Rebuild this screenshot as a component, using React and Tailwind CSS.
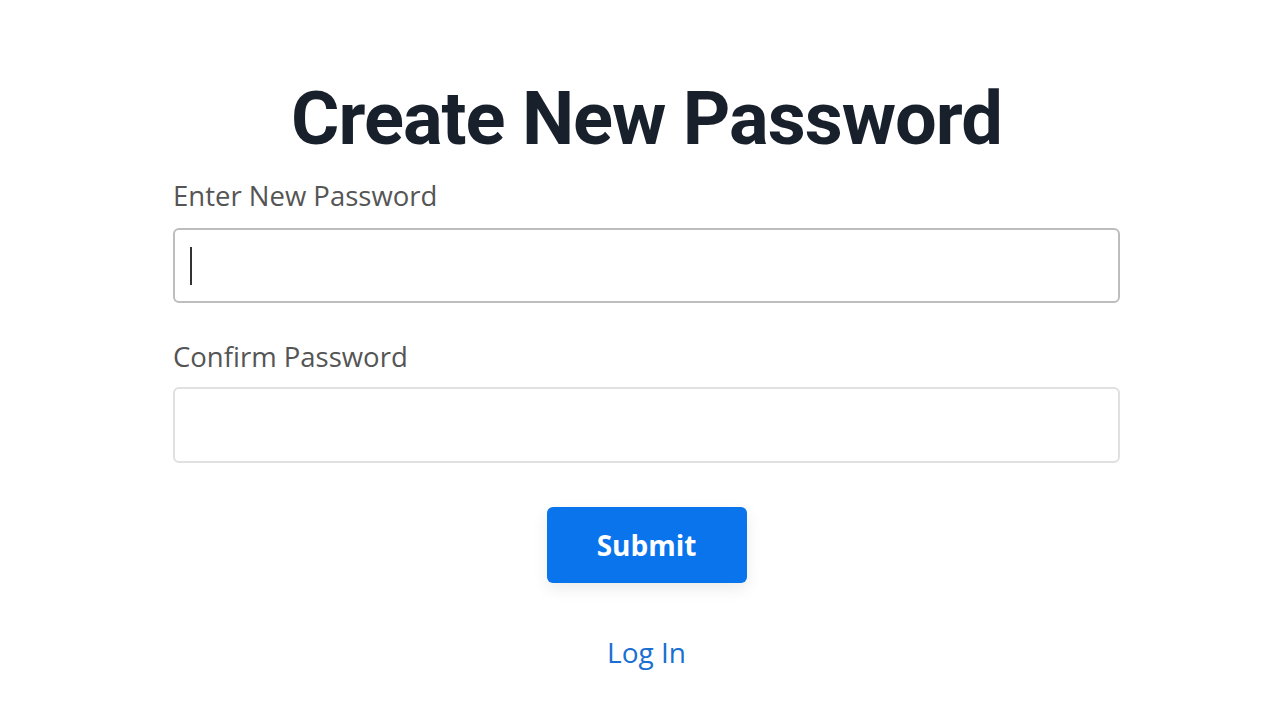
export default function App() {
  return (
    <div className="min-h-[720px] w-full bg-white" style={{ fontFamily: '"Open Sans", sans-serif' }}>
      <div className="ml-[173px] w-[947px] pt-[76px] flex flex-col">
        <h1
          className="text-center text-[74px] leading-[86px] font-bold text-[#18202c] tracking-[-1px]"
          style={{ fontFamily: 'Roboto, sans-serif' }}
        >
          Create New Password
        </h1>
        <label className="mt-[16px] text-[27.5px] leading-[36px] text-[#555555]">Enter New Password</label>
        <div className="mt-[14px] h-[75px] rounded-[6px] border-2 border-[#bdbdbd] flex items-center pl-[15px]">
          <div className="w-[2px] h-[38px] bg-[#333333]" />
        </div>
        <label className="mt-[36px] text-[27.5px] leading-[36px] text-[#555555]">Confirm Password</label>
        <div className="mt-[12px] h-[76px] rounded-[6px] border-2 border-[#e0e0e0]" />
        <div className="mt-[44px] flex justify-center">
          <button className="w-[200px] h-[76px] rounded-[6px] bg-[#0a74ec] text-white text-[28px] font-bold shadow-[0_6px_16px_rgba(0,0,0,0.08)]">
            Submit
          </button>
        </div>
        <div className="mt-[49px] flex justify-center">
          <a className="text-[28px] leading-[40px] text-[#1a6fd1]">Log In</a>
        </div>
      </div>
    </div>
  );
}
